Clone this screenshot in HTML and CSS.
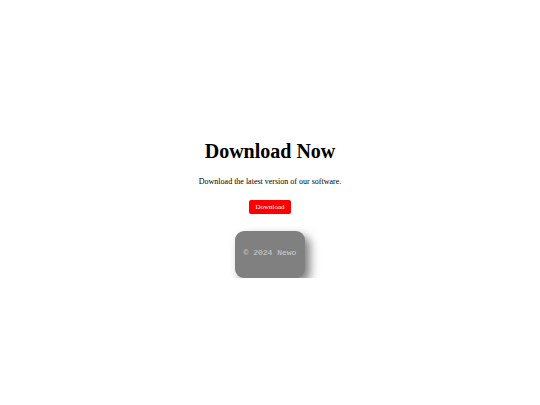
FILE: index.html
```html
<!DOCTYPE html>
<html>
<head>
<meta charset="utf-8">
<link rel="stylesheet" href="styles.css">
</head>
<body>
<main class="page">
  <h1 class="title">Download Now</h1>
  <p class="lead">Download the latest version of our software.</p>
  <button class="btn">Download</button>
  <footer class="foot">© 2024 Newo</footer>
</main>
</body>
</html>
```
FILE: styles.css
```css
html, body {
  margin: 0;
  padding: 0;
  background: #ffffff;
}
.page {
  display: flex;
  flex-direction: column;
  align-items: center;
  padding-top: 140px;
  font-family: "Liberation Serif", "Times New Roman", serif;
  color: #000;
}
.title {
  margin: 0;
  font-size: 20px;
  font-weight: bold;
  line-height: 23px;
}
.lead {
  margin: 14px 0 0;
  font-size: 8px;
  line-height: 10px;
}
.btn {
  margin-top: 13px;
  height: 14px;
  padding: 0 6px;
  border: none;
  border-radius: 2px;
  background: #ff0000;
  color: #ffffff;
  font-family: "Liberation Serif", "Times New Roman", serif;
  font-size: 7px;
  line-height: 14px;
}
.foot {
  margin-top: 17px;
  width: 70px;
  height: 47px;
  box-sizing: border-box;
  display: flex;
  align-items: center;
  justify-content: center;
  padding-bottom: 4px;
  background: #808080;
  border-radius: 9px;
  box-shadow: 5px 5px 10px rgba(0, 0, 0, 0.5);
  color: #d0d0d0;
  font-family: "Liberation Mono", "Courier New", monospace;
  font-size: 8px;
}
```
